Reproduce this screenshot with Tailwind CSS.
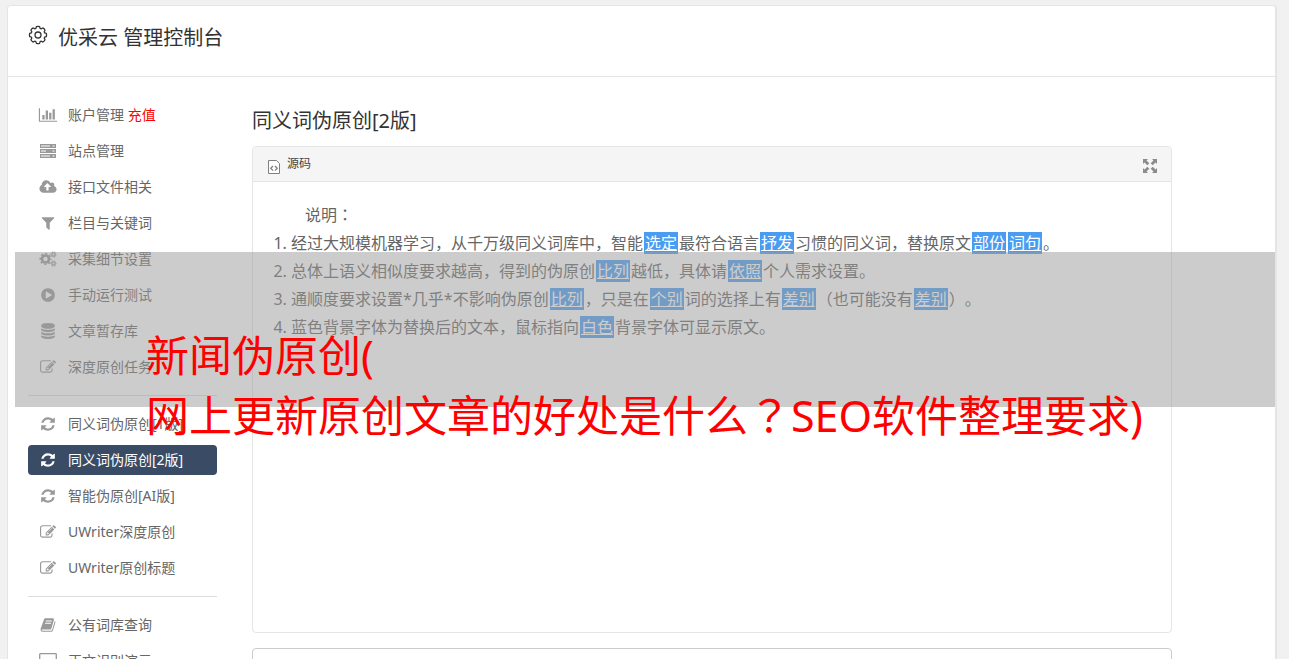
<!DOCTYPE html>
<html lang="zh-CN">
<head>
<meta charset="utf-8">
<title>优采云 管理控制台</title>
<script src="https://cdn.jsdelivr.net/npm/@tailwindcss/browser@4"></script>
</head>
<body class="bg-[#f1f1f1] font-['Noto_Sans','Noto_Sans_CJK_SC',sans-serif] text-[#666] [text-spacing-trim:space-all]">
<svg class="hidden" aria-hidden="true">
  <symbol id="chart" viewBox="0 0 2048 1792"><path d="M640 896v512h-256v-512h256zm384-512v1024h-256v-1024h256zm1024 1152v128h-2048v-1536h128v1408h1920zm-640-896v768h-256v-768h256zm384-384v1152h-256v-1152h256z"/></symbol>
  <symbol id="server" viewBox="0 0 18 16"><path fill-rule="evenodd" d="M1 1h16v4H1zM2 2.500v1h9v-1zM13.500 2.500v1h2v-1zM1 6h16v4H1zM2 7.500v1h5v-1zM13.500 7.500v1h2v-1zM1 11h16v4H1zM2 12.500v1h9v-1zM13.500 12.500v1h2v-1z"/></symbol>
  <symbol id="upload" viewBox="0 0 1920 1792"><path d="M1280 864q0-14-9-23l-352-352q-9-9-23-9t-23 9l-351 351q-10 12-10 24 0 14 9 23t23 9h224v352q0 13 9.500 22.500t22.500 9.500h192q13 0 22.500-9.500t9.500-22.500v-352h224q13 0 22.500-9.500t9.500-22.500zm640 288q0 159-112.500 271.500t-271.500 112.500h-1088q-185 0-316.500-131.500t-131.500-316.500q0-130 70-240t188-165q-2-30-2-43 0-212 150-362t362-150q156 0 285.500 87t188.500 231q71-62 166-62 106 0 181 75t75 181q0 76-41 138 130 31 213.500 135.500t83.500 238.500z"/></symbol>
  <symbol id="filter" viewBox="0 0 1792 1792"><path d="M1595 295q17 41-14 70l-493 493v742q0 42-39 59-13 5-25 5-27 0-45-19l-256-256q-19-19-19-45v-486l-493-493q-31-29-14-70 17-39 59-39h1280q42 0 59 39z"/></symbol>
  <symbol id="cogs" viewBox="0 0 18 16"><g fill="none" stroke="currentColor"><circle cx="6.500" cy="8" r="3.500" stroke-width="2.600"/><circle cx="6.500" cy="8" r="5.300" stroke-width="1.600" stroke-dasharray="2.080 2.080" stroke-dashoffset="1.040"/><circle cx="14.500" cy="3.500" r="1.700" stroke-width="1.300"/><circle cx="14.500" cy="3.500" r="2.700" stroke-width="1" stroke-dasharray="1.410 1.410" stroke-dashoffset=".7"/><circle cx="14.500" cy="12.500" r="1.700" stroke-width="1.300"/><circle cx="14.500" cy="12.500" r="2.700" stroke-width="1" stroke-dasharray="1.410 1.410" stroke-dashoffset=".7"/></g></symbol>
  <symbol id="play" viewBox="0 0 1792 1792"><path d="M896 128q209 0 385.500 103t279.500 279.500 103 385.500-103 385.500-279.500 279.500-385.500 103-385.500-103-279.500-279.500-103-385.500 103-385.500 279.500-279.500 385.500-103zm384 823q32-18 32-55t-32-55l-544-320q-31-19-64-1-32 19-32 56v640q0 37 32 56 16 8 32 8 17 0 32-9z"/></symbol>
  <symbol id="database" viewBox="0 0 1792 1792"><path d="M896 768q237 0 443-43t325-127v170q0 69-103 128t-280 93.500-385 34.500-385-34.500-280-93.500-103-128v-170q119 84 325 127t443 43zm0 768q237 0 443-43t325-127v170q0 69-103 128t-280 93.500-385 34.500-385-34.500-280-93.500-103-128v-170q119 84 325 127t443 43zm0-384q237 0 443-43t325-127v170q0 69-103 128t-280 93.500-385 34.500-385-34.500-280-93.500-103-128v-170q119 84 325 127t443 43zm0-1152q208 0 385 34.500t280 93.500 103 128v128q0 69-103 128t-280 93.500-385 34.500-385-34.500-280-93.500-103-128v-128q0-69 103-128t280-93.500 385-34.500z"/></symbol>
  <symbol id="edit" viewBox="0 0 1792 1792"><path d="M888 1184l116-116-152-152-116 116v56h96v96h56zm440-720q-16-16-33 1l-350 350q-17 17-1 33t33-1l350-350q17-17 1-33zm80 594v190q0 119-84.500 203.500t-203.500 84.500h-832q-119 0-203.500-84.500t-84.500-203.500v-832q0-119 84.500-203.500t203.500-84.500h832q63 0 117 25 15 7 18 23 3 17-9 29l-49 49q-14 14-32 8-23-6-45-6h-832q-66 0-113 47t-47 113v832q0 66 47 113t113 47h832q66 0 113-47t47-113v-126q0-13 9-22l64-64q15-15 35-7t20 29zm-96-738l288 288-672 672h-288v-288zm444 132l-92 92-288-288 92-92q28-28 68-28t68 28l152 152q28 28 28 68t-28 68z"/></symbol>
  <symbol id="refresh" viewBox="0 0 1792 1792"><path d="M1639 1056q0 5-1 7-64 268-268 434.500t-478 166.500q-146 0-282.500-55t-243.500-157l-129 129q-19 19-45 19t-45-19-19-45v-448q0-26 19-45t45-19h448q26 0 45 19t19 45-19 45l-137 137q71 66 161 102t187 36q134 0 250-65t186-179q11-17 53-117 8-23 30-23h192q13 0 22.500 9.500t9.500 22.500zm25-800v448q0 26-19 45t-45 19h-448q-26 0-45-19t-19-45 19-45l138-138q-148-137-349-137-134 0-250 65t-186 179q-11 17-53 117-8 23-30 23h-199q-13 0-22.500-9.500t-9.500-22.500v-7q65-268 270-434.500t480-166.500q146 0 284 55.500t245 156.500l130-129q19-19 45-19t45 19 19 45z"/></symbol>
  <symbol id="book" viewBox="0 0 1792 1792"><path d="M1703 478q40 57 18 129l-275 906q-19 64-76.500 107.500t-122.500 43.500h-923q-77 0-148.500-53.500t-99.500-131.500q-24-67-2-127 0-4 3-27t4-37q1-8-3-21.500t-3-19.500q2-11 8-21t16.500-23.500 16.500-23.500q23-38 45-91.500t30-91.500q3-10 .5-30t-.5-28q3-11 17-28t17-23q21-36 42-92t25-90q1-9-2.500-32t.5-28q4-13 22-30.500t22-22.500q19-26 42.500-84.500t27.500-96.500q1-8-3-25.500t-2-26.500q2-8 9-18t18-23 17-21q8-12 16.500-30.500t15-35 16-36 19.500-32 26.500-23.500 36-11.500 47.500 5.500l-1 3q38-9 51-9h761q74 0 114 56t18 130l-274 906q-36 119-71.500 153.500t-128.500 34.500h-869q-27 0-38 15-11 16-1 43 24 70 144 70h923q29 0 56-15.500t35-41.500l300-987q7-22 5-57 38 15 59 43zm-1064 2q-4 13 2 22.500t20 9.500h608q13 0 25.500-9.500t16.500-22.500l21-64q4-13-2-22.500t-20-9.500h-608q-13 0-25.500 9.500t-16.500 22.500zm-83 256q-4 13 2 22.500t20 9.500h608q13 0 25.500-9.500t16.500-22.500l21-64q4-13-2-22.500t-20-9.500h-608q-13 0-25.500 9.500t-16.500 22.500z"/></symbol>
  <symbol id="desktop" viewBox="0 0 18 16"><path fill="none" stroke="currentColor" stroke-width="1.300" d="M1.500 .7h15q.8 0 .8.800v9q0 .8-.8.800h-15q-.8 0-.8-.8v-9q0-.8.8-.8zM9 11v4M5 15h8"/></symbol>
</svg>

<div class="relative h-screen overflow-hidden pt-[5px] pr-3 pl-[7px]">
  <div class="min-h-full rounded border border-r-2 border-[#e5e5e5] bg-white">
    <header class="flex h-[71px] items-start gap-[10px] border-b border-[#e5e5e5] pt-[19px] pl-5 text-[#333]">
      <svg class="size-5" viewBox="-10 -10 20 20" fill="none" stroke="currentColor" stroke-width="1.300" stroke-linejoin="round" aria-hidden="true"><path d="M8.340-1.620Q8.800 0 8.340 1.620L6.680 2.100 6.210 3.230 7.050 4.750Q6.300 6.300 4.750 7.050L3.230 6.210 2.100 6.680 1.620 8.340Q0 8.800-1.620 8.340L-2.100 6.680-3.230 6.210-4.750 7.050Q-6.300 6.300-7.050 4.750L-6.210 3.230-6.680 2.100-8.340 1.620Q-8.800 0-8.340-1.620L-6.680-2.100-6.210-3.230-7.050-4.750Q-6.300-6.300-4.750-7.050L-3.230-6.210-2.100-6.680-1.620-8.340Q0-8.800 1.620-8.340L2.100-6.680 3.230-6.210 4.750-7.050Q6.300-6.300 7.050-4.750L6.210-3.230 6.680-2.100z"/><circle r="3"/></svg>
      <h1 class="text-xl leading-[26px]">优采云 管理控制台</h1>
    </header>

    <div class="flex gap-[35px] pt-[23px] pr-[103px] pl-5">
      <nav class="w-[189px] shrink-0 text-sm">
        <ul class="flex flex-col gap-1.5">
          <li><a href="#" class="flex h-[30px] items-center gap-[10px] pl-[10px]"><svg class="h-4 w-5 fill-current text-[#999]"><use href="#chart"/></svg><span>账户管理 <span class="text-[#f00]">充值</span></span></a></li>
          <li><a href="#" class="flex h-[30px] items-center gap-[10px] pl-[10px]"><svg class="h-4 w-5 fill-current text-[#999]"><use href="#server"/></svg>站点管理</a></li>
          <li><a href="#" class="flex h-[30px] items-center gap-[10px] pl-[10px]"><svg class="h-4 w-5 fill-current text-[#999]"><use href="#upload"/></svg>接口文件相关</a></li>
          <li><a href="#" class="flex h-[30px] items-center gap-[10px] pl-[10px]"><svg class="h-4 w-5 fill-current text-[#999]"><use href="#filter"/></svg>栏目与关键词</a></li>
          <li><a href="#" class="flex h-[30px] items-center gap-[10px] pl-[10px]"><svg class="h-4 w-5 fill-current text-[#999]"><use href="#cogs"/></svg>采集细节设置</a></li>
          <li><a href="#" class="flex h-[30px] items-center gap-[10px] pl-[10px]"><svg class="h-4 w-5 fill-current text-[#999]"><use href="#play"/></svg>手动运行测试</a></li>
          <li><a href="#" class="flex h-[30px] items-center gap-[10px] pl-[10px]"><svg class="h-4 w-5 fill-current text-[#999]"><use href="#database"/></svg>文章暂存库</a></li>
          <li><a href="#" class="flex h-[30px] items-center gap-[10px] pl-[10px]"><svg class="h-4 w-5 fill-current text-[#999]"><use href="#edit"/></svg>深度原创任务</a></li>
        </ul>
        <hr class="my-[13px] border-[#ddd]">
        <ul class="flex flex-col gap-1.5">
          <li><a href="#" class="flex h-[30px] items-center gap-[10px] pl-[10px]"><svg class="h-4 w-5 fill-current text-[#999]"><use href="#refresh"/></svg>同义词伪原创[1版]</a></li>
          <li><a href="#" aria-current="page" class="flex h-[30px] items-center gap-[10px] rounded bg-[#3a4b66] pl-[10px] text-white"><svg class="h-4 w-5 fill-current"><use href="#refresh"/></svg>同义词伪原创[2版]</a></li>
          <li><a href="#" class="flex h-[30px] items-center gap-[10px] pl-[10px]"><svg class="h-4 w-5 fill-current text-[#999]"><use href="#refresh"/></svg>智能伪原创[AI版]</a></li>
          <li><a href="#" class="flex h-[30px] items-center gap-[10px] pl-[10px]"><svg class="h-4 w-5 fill-current text-[#999]"><use href="#edit"/></svg>UWriter深度原创</a></li>
          <li><a href="#" class="flex h-[30px] items-center gap-[10px] pl-[10px]"><svg class="h-4 w-5 fill-current text-[#999]"><use href="#edit"/></svg>UWriter原创标题</a></li>
        </ul>
        <hr class="my-[13px] border-[#ddd]">
        <ul class="flex flex-col gap-1.5">
          <li><a href="#" class="flex h-[30px] items-center gap-[10px] pl-[10px]"><svg class="h-4 w-5 fill-current text-[#999]"><use href="#book"/></svg>公有词库查询</a></li>
          <li><a href="#" class="flex h-[30px] items-center gap-[10px] pl-[10px]"><svg class="h-4 w-5 fill-current text-[#999]"><use href="#desktop"/></svg>正文识别演示</a></li>
        </ul>
      </nav>

      <main class="min-w-0 flex-1 pt-2">
        <h2 class="text-xl leading-[26px] text-[#333]">同义词伪原创[2版]</h2>
        <section class="mt-3 min-h-[487px] rounded border border-[#e5e5e5]">
          <div class="flex h-[35px] items-center justify-between rounded-t border-b border-[#e5e5e5] bg-[#f5f5f5] pt-1 pr-[13px] pl-[15px]">
            <button type="button" class="flex items-center gap-[7px] text-xs leading-4 text-[#444]">
              <svg class="h-[15px] w-3" viewBox="0 0 12 15" fill="none" stroke="#808080" aria-hidden="true"><path fill="#fff" d="M.5 1.500v13h11V4.500l-3-3z"/><path stroke-width="1.300" d="M5 7 2.800 9.300 5 11.600M7 7l2.200 2.300L7 11.600"/></svg>
              <span class="pb-1">源码</span>
            </button>
            <button type="button" aria-label="全屏">
              <svg class="size-4" viewBox="0 0 16 16" fill="#8c8c8c" aria-hidden="true"><path d="M1 1h5L4.500 2.500l2.800 2.800-2 2-2.800-2.800L1 6zM15 1v5l-1.500-1.500-2.800 2.800-2-2 2.800-2.800L10 1zM1 15v-5l1.500 1.500 2.800-2.800 2 2-2.800 2.800L6 15zM15 15h-5l1.500-1.500-2.800-2.800 2-2 2.800 2.800L15 10z"/></svg>
            </button>
          </div>
          <div class="pt-[19px] pl-[38px] text-base leading-7">
            <p class="pl-[14px]">说明<span class="font-['Noto_Sans_CJK_JP',sans-serif] leading-none" lang="ja">：</span></p>
            <ol class="list-decimal">
              <li>经过大规模机器学习，从千万级同义词库中，智能<a href="#" class="mx-px bg-[#4a9cf2] px-px text-white underline">选定</a>最符合语言<a href="#" class="mx-px bg-[#4a9cf2] px-px text-white underline">抒发</a>习惯的同义词，替换原文<a href="#" class="mx-px bg-[#4a9cf2] px-px text-white underline">部份</a><a href="#" class="mx-px bg-[#4a9cf2] px-px text-white underline">词句</a>。</li>
              <li>总体上语义相似度要求越高，得到的伪原创<a href="#" class="mx-px bg-[#4a9cf2] px-px text-white underline">比列</a>越低，具体请<a href="#" class="mx-px bg-[#4a9cf2] px-px text-white underline">依照</a>个人需求设置。</li>
              <li>通顺度要求设置*几乎*不影响伪原创<a href="#" class="mx-px bg-[#4a9cf2] px-px text-white underline">比列</a>，只是在<a href="#" class="mx-px bg-[#4a9cf2] px-px text-white underline">个别</a>词的选择上有<a href="#" class="mx-px bg-[#4a9cf2] px-px text-white underline">差别</a>（也可能没有<a href="#" class="mx-px bg-[#4a9cf2] px-px text-white underline">差别</a>）。</li>
              <li>蓝色背景字体为替换后的文本，鼠标指向<a href="#" class="mx-px bg-[#4a9cf2] px-px text-white underline">白色</a>背景字体可显示原文。</li>
            </ol>
          </div>
        </section>
        <section class="mt-[15px] h-20 rounded border border-[#ccc]"></section>
      </main>
    </div>
  </div>

  <!-- Caption band laid over the console -->
  <div class="absolute top-[252px] right-[14px] left-[15px] h-[155px] bg-[#999]/50 pt-[74px] pl-[131px] text-[43px] leading-[60px] whitespace-nowrap text-[#f00]">
    <p>新闻伪原创(</p>
    <p>网上更新原创文章的好处是什么<span class="font-['Noto_Sans_CJK_JP',sans-serif] leading-none" lang="ja">？</span>SEO软件整理要求)</p>
  </div>
</div>
</body>
</html>
